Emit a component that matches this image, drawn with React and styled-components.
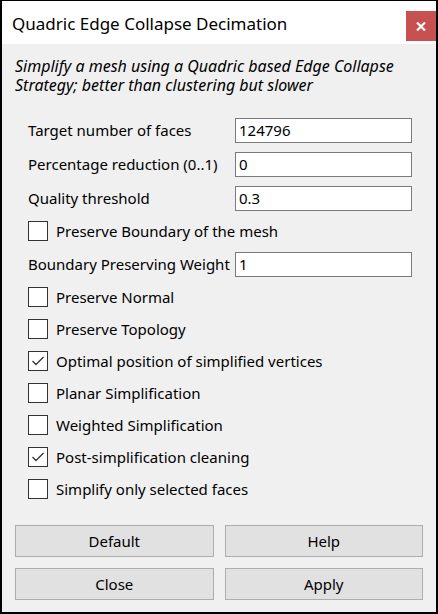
import React from "react";
import styled, { createGlobalStyle } from "styled-components";

const Global = createGlobalStyle`
  html, body { margin: 0; padding: 0; background: #ffffff; }
  body { font-family: "Noto Sans", "Open Sans", sans-serif; }
  * { box-sizing: border-box; }
`;

const Window = styled.div`
  width: 438px;
  height: 614px;
  border: 2px solid #000;
  border-top-width: 1px;
  background: #f0f0f0;
  display: flex;
  flex-direction: column;
`;

const TitleBar = styled.div`
  height: 43px;
  background: #fff;
  display: flex;
  align-items: flex-start;
  justify-content: space-between;
`;

const Title = styled.div`
  font-size: 17px;
  color: #000;
  padding: 11px 0 0 10px;
`;

const CloseBtn = styled.div`
  width: 30px;
  height: 30px;
  margin-top: 10px;
  background: #c75050;
  display: flex;
  align-items: center;
  justify-content: center;
`;

const Body = styled.div`
  flex: 1;
  display: flex;
  flex-direction: column;
  padding: 13px 13px 12px 13px;
`;

const Description = styled.div`
  font-style: italic;
  font-size: 16px;
  line-height: 19px;
  color: #000;
`;

const Form = styled.div`
  display: flex;
  flex-direction: column;
  margin-top: 18px;
  padding-left: 13px;
`;

const FieldRow = styled.div`
  height: 34px;
  display: flex;
  align-items: center;
`;

const Label = styled.div`
  width: 207px;
  font-size: 15px;
  color: #000;
  white-space: nowrap;
`;

const Input = styled.div`
  width: 177px;
  height: 25px;
  border: 1px solid #7a7a7a;
  background: #fff;
  font-size: 15px;
  line-height: 23px;
  padding-left: 3px;
  color: #000;
`;

const CheckRow = styled.div`
  height: 32px;
  display: flex;
  align-items: center;
  gap: 8px;
  font-size: 15px;
  color: #000;
`;

const Box = styled.div`
  width: 20px;
  height: 20px;
  border: 1px solid #333;
  background: #fff;
  display: flex;
  align-items: center;
  justify-content: center;
`;

const Buttons = styled.div`
  margin-top: auto;
  display: grid;
  grid-template-columns: 1fr 1fr;
  gap: 11px;
`;

const Button = styled.div`
  height: 32px;
  border: 1px solid #adadad;
  background: #e1e1e1;
  display: flex;
  align-items: center;
  justify-content: center;
  font-size: 15px;
  color: #000;
`;

function Check({ checked, label }) {
  return (
    <CheckRow>
      <Box>
        {checked && (
          <svg width="14" height="12" viewBox="0 0 14 12">
            <path d="M1.5 6 L5 9.5 L12.5 2" fill="none" stroke="#333" strokeWidth="1.3" />
          </svg>
        )}
      </Box>
      {label}
    </CheckRow>
  );
}

function Field({ label, value }) {
  return (
    <FieldRow>
      <Label>{label}</Label>
      <Input>{value}</Input>
    </FieldRow>
  );
}

export default function App() {
  return (
    <>
      <Global />
      <Window>
        <TitleBar>
          <Title>Quadric Edge Collapse Decimation</Title>
          <CloseBtn>
            <svg width="10" height="9" viewBox="0 0 10 9">
              <path d="M1 0.5 L9 8.5 M9 0.5 L1 8.5" stroke="#fff" strokeWidth="2.2" />
            </svg>
          </CloseBtn>
        </TitleBar>
        <Body>
          <Description>
            Simplify a mesh using a Quadric based Edge Collapse Strategy; better than clustering but slower
          </Description>
          <Form>
            <Field label="Target number of faces" value="124796" />
            <Field label="Percentage reduction (0..1)" value="0" />
            <Field label="Quality threshold" value="0.3" />
            <Check label="Preserve Boundary of the mesh" />
            <Field label="Boundary Preserving Weight" value="1" />
            <Check label="Preserve Normal" />
            <Check label="Preserve Topology" />
            <Check checked label="Optimal position of simplified vertices" />
            <Check label="Planar Simplification" />
            <Check label="Weighted Simplification" />
            <Check checked label="Post-simplification cleaning" />
            <Check label="Simplify only selected faces" />
          </Form>
          <Buttons>
            <Button>Default</Button>
            <Button>Help</Button>
            <Button>Close</Button>
            <Button>Apply</Button>
          </Buttons>
        </Body>
      </Window>
    </>
  );
}
